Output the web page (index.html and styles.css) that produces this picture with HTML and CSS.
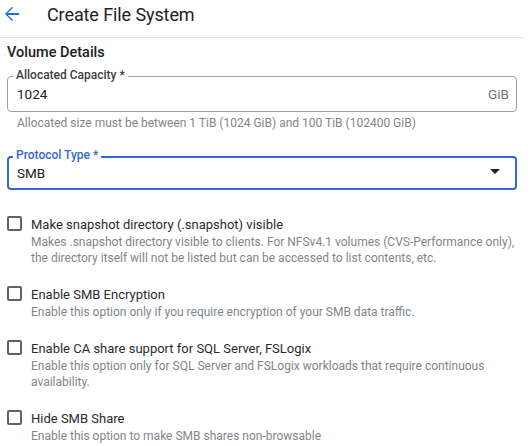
FILE: index.html
```html
<!DOCTYPE html>
<html>
<head>
<meta charset="utf-8">
<link rel="stylesheet" href="styles.css">
</head>
<body>
<div class="page">
  <header class="header">
    <svg class="back" width="16" height="16" viewBox="0 0 16 16"><path d="M15 7H3.8l5.2-5.2L8 0.8 1 8l7 7 1-1L3.8 9H15z" fill="#1a73e8"/></svg>
    <h1 class="title">Create File System</h1>
  </header>
  <main class="content">
    <h2 class="section">Volume Details</h2>
    <div class="field">
      <span class="flabel">Allocated Capacity *</span>
      <div class="fbox">
        <span class="fvalue">1024</span>
        <span class="suffix">GiB</span>
      </div>
    </div>
    <div class="hint">Allocated size must be between 1 TiB (1024 GiB) and 100 TiB (102400 GiB)</div>
    <div class="field focused">
      <span class="flabel">Protocol Type *</span>
      <div class="fbox">
        <span class="fvalue">SMB</span>
        <span class="caret"></span>
      </div>
    </div>
    <div class="options">
      <div class="opt">
        <span class="cb"></span>
        <div class="otext">
          <div class="olabel">Make snapshot directory (.snapshot) visible</div>
          <div class="odesc">Makes .snapshot directory visible to clients. For NFSv4.1 volumes (CVS-Performance only), the directory itself will not be listed but can be accessed to list contents, etc.</div>
        </div>
      </div>
      <div class="opt">
        <span class="cb"></span>
        <div class="otext">
          <div class="olabel">Enable SMB Encryption</div>
          <div class="odesc">Enable this option only if you require encryption of your SMB data traffic.</div>
        </div>
      </div>
      <div class="opt">
        <span class="cb"></span>
        <div class="otext">
          <div class="olabel">Enable CA share support for SQL Server, FSLogix</div>
          <div class="odesc">Enable this option only for SQL Server and FSLogix workloads that require continuous availability.</div>
        </div>
      </div>
      <div class="opt">
        <span class="cb"></span>
        <div class="otext">
          <div class="olabel">Hide SMB Share</div>
          <div class="odesc">Enable this option to make SMB shares non-browsable</div>
        </div>
      </div>
    </div>
  </main>
</div>
</body>
</html>
```
FILE: styles.css
```css
* { box-sizing: border-box; }
html, body { margin: 0; padding: 0; background: #fff; }
body { font-family: Roboto, "Liberation Sans", sans-serif; color: #202124; }
.page { width: 524px; }
.header {
  display: flex; align-items: center; height: 38px;
  border-bottom: 1.5px solid #e4e4e4;
  padding-left: 4px;
}
.back { display: block; margin-top: -9px; }
.title { margin: -9px 0 0 27px; font-size: 18px; font-weight: 400; letter-spacing: -0.1px; color: #202124; }
.content { padding: 0 7px; }
.section { margin: 6px 0 0; font-size: 14.5px; font-weight: 500; line-height: 17px; color: #202124; }
.field { position: relative; margin-top: 15px; }
.fbox {
  height: 36px; border: 1px solid #9aa0a6; border-radius: 4px;
  display: flex; align-items: center; padding: 0 7px 0 9px;
}
.flabel {
  position: absolute; left: 6px; top: -8px; background: #fff;
  padding: 0 3px; font-size: 12px; font-weight: 500; line-height: 14px; color: #3c4043;
}
.fvalue { flex: 1; font-size: 13.5px; color: #202124; }
.suffix { font-size: 13.5px; color: #757575; }
.hint { font-size: 12px; color: #80868b; padding-left: 10px; margin-top: 4px; line-height: 14px; }
.focused { margin-top: 26px; }
.focused .fbox { border: 2px solid #3367d6; height: 34px; padding-left: 8px; }
.focused .flabel { color: #3367d6; }
.caret {
  width: 0; height: 0; border-left: 5px solid transparent; border-right: 5px solid transparent;
  border-top: 5px solid #202124; margin-right: 8px; margin-top: -3px;
}
.options { margin-top: 26px; display: flex; flex-direction: column; gap: 20px; }
.opt { display: flex; align-items: flex-start; }
.cb {
  width: 15px; height: 15px; border: 2px solid #5f6368; border-radius: 2px;
  flex: none; margin-top: 0;
}
.otext { margin-left: 9px; }
.olabel { font-size: 13px; line-height: 17px; color: #2a2b2e; }
.odesc { font-size: 12px; line-height: 16px; color: #80868b; margin-top: 1px; }
```
